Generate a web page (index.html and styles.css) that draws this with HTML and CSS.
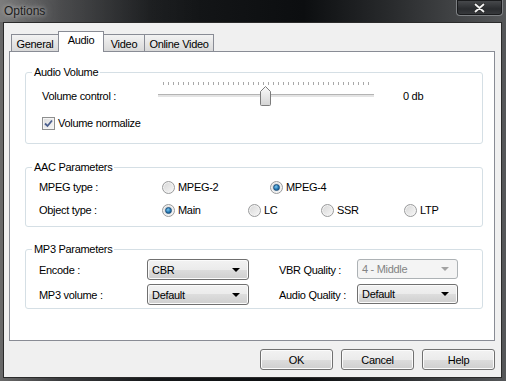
FILE: index.html
```html
<!DOCTYPE html>
<html lang="en">
<head>
    <meta charset="UTF-8">
    <title>Options</title>
    <link rel="stylesheet" href="styles.css">
</head>
<body>

    <div class="window">
        <!-- barra de titulo -->
        <div class="titlebar">
            <span class="title">Options</span>
            <div class="close">
                <svg width="11" height="10" viewBox="0 0 11 10">
                    <path d="M1.5 1.5 L9.5 8.5 M9.5 1.5 L1.5 8.5" stroke="#2a2a2a" stroke-width="3.2" stroke-linecap="round"/>
                    <path d="M1.5 1.5 L9.5 8.5 M9.5 1.5 L1.5 8.5" stroke="#f4f4f4" stroke-width="1.8" stroke-linecap="round"/>
                </svg>
            </div>
        </div>

        <div class="client">
            <div class="tabs">
                <div class="tab t-general">General</div>
                <div class="tab t-audio active">Audio</div>
                <div class="tab t-video">Video</div>
                <div class="tab t-online">Online Video</div>
            </div>

            <div class="panel">
                <!-- Audio Volume -->
                <fieldset class="group g-volume">
                    <legend>Audio Volume</legend>
                    <div class="vol-row">
                        <span class="vol-label">Volume control :</span>
                        <div class="slider">
                            <div class="ticks"></div>
                            <div class="track"></div>
                            <svg class="thumb" width="11" height="20" viewBox="0 0 11 20">
                                <defs>
                                    <linearGradient id="thumbGrad" x1="0" y1="0" x2="0" y2="1">
                                        <stop offset="0" stop-color="#fbfbfb"/>
                                        <stop offset="1" stop-color="#d4d4d4"/>
                                    </linearGradient>
                                </defs>
                                <path d="M1.5 19.5 Q0.5 19.5 0.5 18.5 V5.5 L5.5 0.5 L10.5 5.5 V18.5 Q10.5 19.5 9.5 19.5 Z" fill="url(#thumbGrad)" stroke="#7c7c7c"/>
                            </svg>
                        </div>
                        <span class="db">0 db</span>
                    </div>
                    <div class="check-row">
                        <span class="checkbox">
                            <svg width="11" height="11" viewBox="0 0 11 11">
                                <path d="M2 5.5 L4.5 8 L9 2.5" fill="none" stroke="#4b5f8e" stroke-width="1.8"/>
                            </svg>
                        </span>
                        Volume normalize
                    </div>
                </fieldset>

                <!-- AAC -->
                <fieldset class="group g-aac">
                    <legend>AAC Parameters</legend>
                    <div class="opt-row">
                        <span class="row-label">MPEG type :</span>
                        <label class="opt w-mpeg2"><span class="radio"></span>MPEG-2</label>
                        <label class="opt"><span class="radio on"></span>MPEG-4</label>
                    </div>
                    <div class="opt-row">
                        <span class="row-label">Object type :</span>
                        <label class="opt w-main"><span class="radio on"></span>Main</label>
                        <label class="opt w-lc"><span class="radio"></span>LC</label>
                        <label class="opt w-ssr"><span class="radio"></span>SSR</label>
                        <label class="opt"><span class="radio"></span>LTP</label>
                    </div>
                </fieldset>

                <!-- MP3 -->
                <fieldset class="group g-mp3">
                    <legend>MP3 Parameters</legend>
                    <div class="mp3-grid">
                        <span class="row-label">Encode :</span>
                        <div class="combo"><span>CBR</span><i class="arrow"></i></div>
                        <span></span>
                        <span class="row-label">VBR Quality :</span>
                        <div class="combo right disabled"><span>4 - Middle</span><i class="arrow"></i></div>

                        <span class="row-label">MP3 volume :</span>
                        <div class="combo"><span>Default</span><i class="arrow"></i></div>
                        <span></span>
                        <span class="row-label">Audio Quality :</span>
                        <div class="combo right"><span>Default</span><i class="arrow"></i></div>
                    </div>
                </fieldset>
            </div>

            <div class="buttons">
                <button>OK</button>
                <button>Cancel</button>
                <button>Help</button>
            </div>
        </div>
    </div>

</body>
</html>
```

FILE: styles.css
```css
body {
    margin: 0;
    font-family: "Liberation Sans", Arial, sans-serif;
    font-size: 11px;
    letter-spacing: -0.3px;
    color: #000;
    background: #000;
}

.window {
    width: 506px;
    height: 381px;
    display: flex;
    flex-direction: column;
    background: linear-gradient(to right, #6a6a6a 0%, #3a3b3d 12%, #16181a 30%, #0c0e10 60%, #2a2c2e 78%, #555759 100%);
}

.titlebar {
    height: 22px;
    display: flex;
    justify-content: space-between;
    align-items: flex-start;
    background: linear-gradient(to right, rgba(255,255,255,0.12), rgba(255,255,255,0) 40%);
}

.title {
    font-size: 12px;
    line-height: 14px;
    letter-spacing: 0;
    padding: 4px 0 0 4px;
    color: #1c1c1c;
    text-shadow: 0 0 4px rgba(210, 210, 210, 0.8), 0 0 8px rgba(210, 210, 210, 0.6);
}

.close {
    width: 45px;
    height: 15px;
    margin-right: 3px;
    display: flex;
    align-items: center;
    justify-content: center;
    border: 1px solid #7e8184;
    border-top: none;
    border-radius: 0 0 4px 4px;
    background: linear-gradient(#4a4c4f, #2a2c2f 60%, #3a3c3f);
    box-shadow: inset 0 0 0 1px #1a1b1d;
}

.client {
    flex: 1;
    margin: 0 4px 3px 3px;
    border: 1px solid #2b2b2b;
    background: #f0f0f0;
    padding: 8px 6px 0 5px;
    display: flex;
    flex-direction: column;
}

/* tabs */
.tabs {
    display: flex;
    align-items: flex-end;
    height: 20px;
    margin-left: 2px;
}

.tab {
    height: 17px;
    box-sizing: border-box;
    border: 1px solid #898c95;
    border-bottom: none;
    background: linear-gradient(#f3f3f3, #e6e6e6 50%, #d9d9d9);
    display: flex;
    align-items: center;
    justify-content: center;
    padding-top: 1px;
}

.tab + .tab {
    margin-left: -1px;
}

.t-general { width: 48px; }
.t-audio { width: 46px; }
.t-video { width: 42px; }
.t-online { width: 70px; }

.tab.active {
    height: 21px;
    margin-bottom: -1px;
    background: #fff;
    position: relative;
    padding-top: 0;
    padding-bottom: 4px;
}

.panel {
    height: 290px;
    box-sizing: border-box;
    border: 1px solid #898c95;
    background: #fff;
    display: flex;
    flex-direction: column;
}

/* grupos */
.group {
    margin: 0 11px 0 15px;
    padding: 0;
    border: 1px solid #d5dfe5;
    border-radius: 3px;
}

.group legend {
    margin-left: 6px;
    padding: 0 2px;
    line-height: 13px;
}

.g-volume { margin-top: 14px; padding-bottom: 10px; }
.g-aac { margin-top: 17px; padding-bottom: 6px; }
.g-mp3 { margin-top: 16px; padding-bottom: 3px; }

.vol-row {
    height: 26px;
    margin-top: 4px;
    padding-left: 16px;
    display: flex;
}

.vol-label {
    width: 116px;
    align-self: center;
}

.slider {
    width: 216px;
    height: 24px;
    margin-top: -1px;
    position: relative;
}

.ticks {
    width: 207px;
    height: 3px;
    margin-left: 5px;
    background: repeating-linear-gradient(to right, #a9a9a9 0 1px, transparent 1px 5px);
}

.track {
    height: 3px;
    margin-top: 9px;
    box-sizing: border-box;
    border-top: 1px solid #b4b4b4;
    background: #e4e4e4;
}

.thumb {
    position: absolute;
    left: 102px;
    top: 4px;
}

.db {
    align-self: center;
    margin-left: 29px;
}

.check-row {
    height: 20px;
    margin-top: 4px;
    padding-left: 16px;
    display: flex;
    align-items: center;
}

.checkbox {
    width: 13px;
    height: 13px;
    box-sizing: border-box;
    border: 1px solid #8e8f8f;
    background: linear-gradient(135deg, #dcdcdc, #f7f7f7);
    box-shadow: inset 0 0 0 1px #f4f4f4;
    display: flex;
    align-items: center;
    justify-content: center;
    margin-right: 3px;
}

.opt-row {
    height: 20px;
    margin-top: 3px;
    padding-left: 13px;
    display: flex;
    align-items: center;
}

.opt-row .row-label {
    width: 123px;
}

.opt {
    display: flex;
    align-items: center;
}

.w-mpeg2 { width: 108px; }
.w-main { width: 86px; }
.w-lc { width: 73px; }
.w-ssr { width: 83px; }

.radio {
    width: 13px;
    height: 13px;
    box-sizing: border-box;
    border-radius: 50%;
    border: 1px solid #9a9b9c;
    background: linear-gradient(135deg, #d6d6d6, #f8f8f8);
    box-shadow: inset 0 0 0 1px #f3f3f3;
    margin-right: 3px;
    display: flex;
    align-items: center;
    justify-content: center;
}

.radio.on::after {
    content: "";
    width: 7px;
    height: 7px;
    box-sizing: border-box;
    border-radius: 50%;
    border: 1px solid #1c4f7c;
    background: radial-gradient(circle at 40% 35%, #7fc8f0, #2479b4 55%, #0d4675);
}

.mp3-grid {
    margin-top: 3px;
    padding-left: 13px;
    display: grid;
    grid-template-columns: 108px 102px 30px 78px 101px;
    grid-template-rows: 21px 21px;
    row-gap: 4px;
    align-items: center;
}

.combo {
    height: 21px;
    box-sizing: border-box;
    border: 1px solid #707070;
    border-radius: 3px;
    background: linear-gradient(#f2f2f2 0%, #ebebeb 50%, #dddddd 50%, #cfcfcf 100%);
    box-shadow: inset 0 0 0 1px #fbfbfb;
    display: flex;
    align-items: center;
    justify-content: space-between;
    padding: 0 8px 0 4px;
}

.combo.right {
    height: 20px;
    margin-top: -2px;
}

.arrow {
    width: 0;
    height: 0;
    border-left: 4px solid transparent;
    border-right: 4px solid transparent;
    border-top: 4px solid #000;
}

.combo.disabled {
    border-color: #adb2b5;
    background: #f4f4f4;
    box-shadow: none;
    color: #838383;
}

.combo.disabled .arrow {
    border-top-color: #a2a2a2;
}

/* botoes de baixo */
.buttons {
    display: flex;
    justify-content: flex-end;
    gap: 8px;
    margin-top: 8px;
}

.buttons button {
    width: 73px;
    height: 21px;
    font-family: "Liberation Sans", Arial, sans-serif;
    font-size: 11px;
    letter-spacing: -0.3px;
    color: #000;
    border: 1px solid #707070;
    border-radius: 3px;
    background: linear-gradient(#f2f2f2 0%, #ebebeb 50%, #dddddd 50%, #cfcfcf 100%);
    box-shadow: inset 0 0 0 1px #fbfbfb;
    padding: 0;
}
```
